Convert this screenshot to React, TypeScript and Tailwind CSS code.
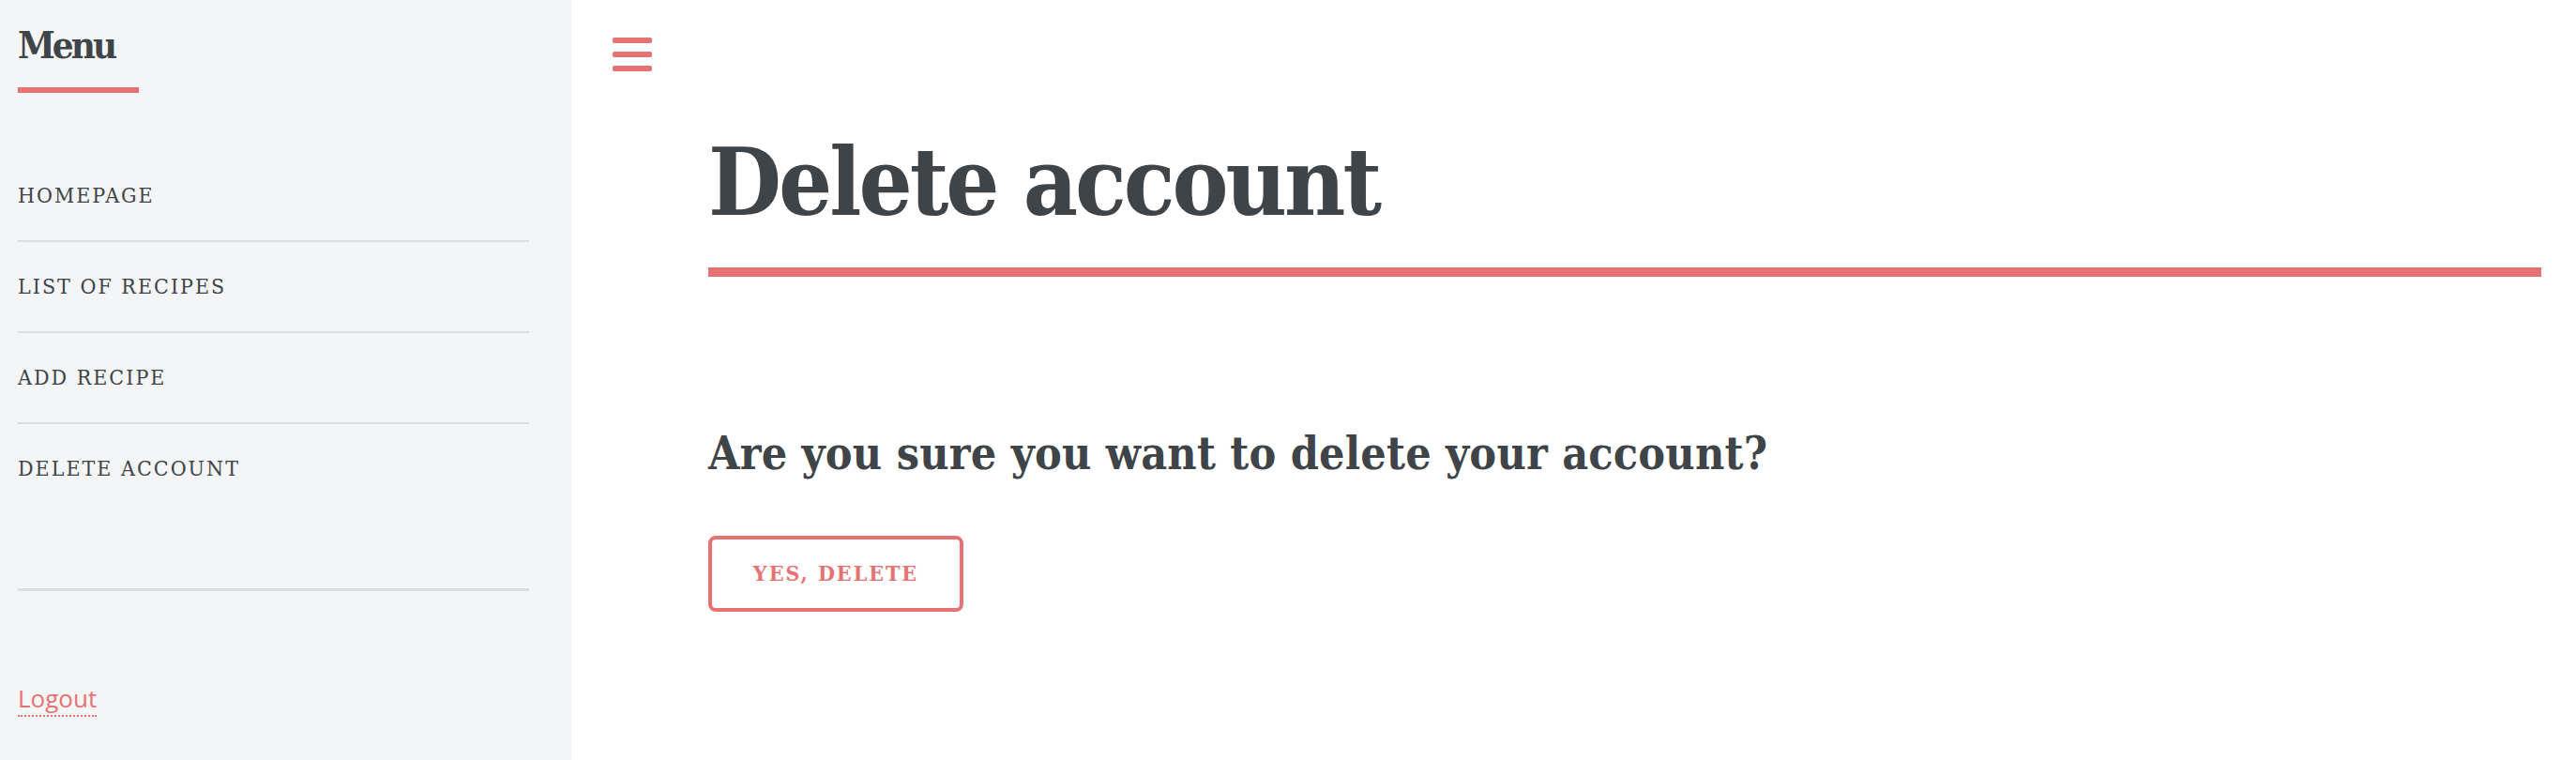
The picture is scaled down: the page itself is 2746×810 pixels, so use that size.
const slab = "font-['DejaVu_Serif',serif] font-stretch-condensed";

function Sidebar() {
  return (
    <div className="w-[609px] shrink-0 bg-[#f4f5f7] pl-[19px] pr-[45px] pt-[28px]">
      <p className={`${slab} font-bold text-[40px] leading-[40px] tracking-[-3px] text-[#3f4448]`}>Menu</p>
      <div className="mt-[25px] h-[6px] w-[129px] bg-[#e57373]" />

      <ul className={`${slab} mt-[62px] text-[23px] leading-[23px] tracking-[2px] text-[#3f4448]`}>
        <li className="py-[36px] border-b-2 border-[#dcdde0]">HOMEPAGE</li>
        <li className="py-[36px] border-b-2 border-[#dcdde0]">LIST OF RECIPES</li>
        <li className="py-[36px] border-b-2 border-[#dcdde0]">ADD RECIPE</li>
        <li className="py-[36px]">DELETE ACCOUNT</li>
      </ul>

      <div className="mt-[80px] h-[3px] bg-[#dcdde0]" />

      <a className="mt-[101px] inline-block font-['Open_Sans',sans-serif] text-[26px] leading-[26px] pb-[5px] text-[#e57373] border-b-2 border-dotted border-[#e57373]">
        Logout
      </a>
    </div>
  );
}

export default function App() {
  return (
    <div className="flex min-h-screen bg-white">
      <Sidebar />
      <div className="flex-1 pl-[44px] pr-[37px]">
        <button className="mt-[40px] flex flex-col gap-[9px]">
          <span className="block h-[6px] w-[42px] rounded-[2px] bg-[#e57373]" />
          <span className="block h-[6px] w-[42px] rounded-[2px] bg-[#e57373]" />
          <span className="block h-[6px] w-[42px] rounded-[2px] bg-[#e57373]" />
        </button>

        <div className="ml-[102px]">
          <h1 className={`${slab} mt-[68px] font-bold text-[100px] leading-[100px] tracking-[-3px] text-[#3f4448]`}>
            Delete account
          </h1>
          <div className="mt-[41px] h-[10px] bg-[#e57373]" />

          <h2 className={`${slab} mt-[164px] font-bold text-[48px] leading-[48px] tracking-[0.2px] text-[#3f4448]`}>
            Are you sure you want to delete your account?
          </h2>

          <button className={`${slab} mt-[64px] flex h-[81px] w-[272px] items-center justify-center rounded-[8px] border-4 border-[#e57373] font-bold text-[23px] tracking-[2px] text-[#e57373]`}>
            YES, DELETE
          </button>
        </div>
      </div>
    </div>
  );
}
